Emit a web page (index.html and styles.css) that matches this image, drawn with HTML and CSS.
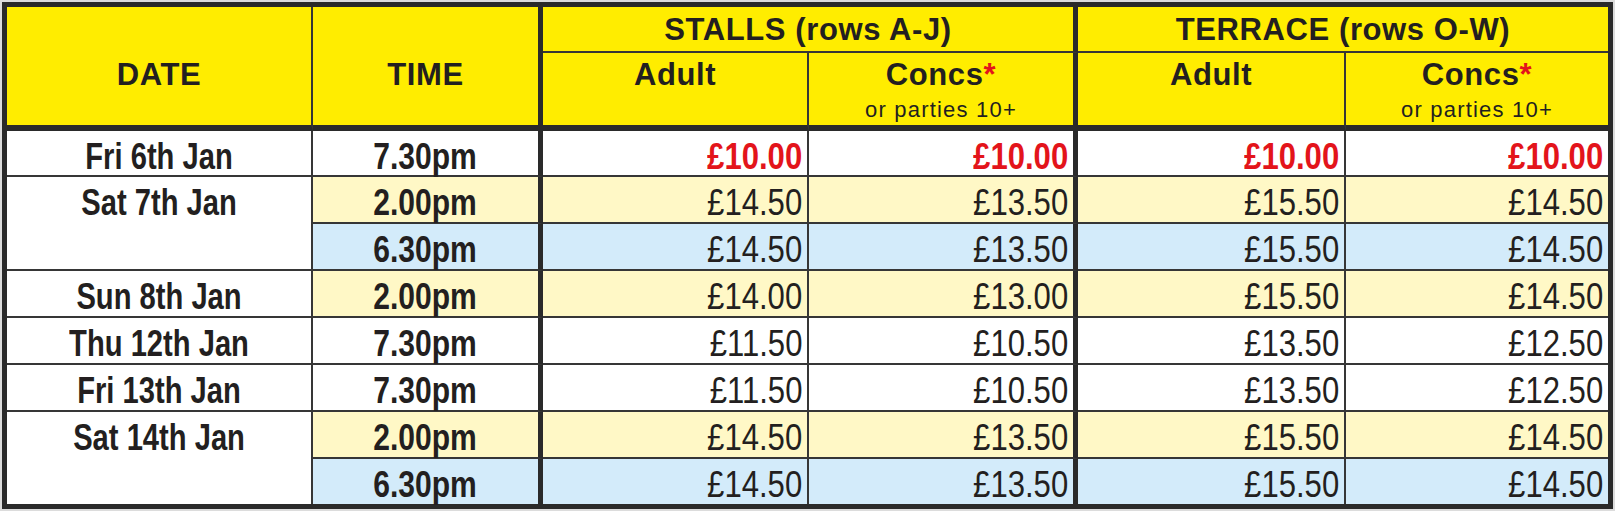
FILE: index.html
```html
<!DOCTYPE html>
<html lang="en">
<head>
<meta charset="utf-8">
<title>Ticket prices</title>
<link rel="stylesheet" href="styles.css">
</head>
<body>
<table class="prices">
  <colgroup>
    <col class="c-date"><col class="c-time"><col class="c-sa"><col class="c-sc"><col class="c-ta"><col class="c-tc">
  </colgroup>
  <thead>
    <tr class="group-row">
      <th rowspan="2" class="h-main thin">DATE</th>
      <th rowspan="2" class="h-main thick">TIME</th>
      <th colspan="2" class="h-group thick">STALLS (rows A-J)</th>
      <th colspan="2" class="h-group">TERRACE (rows O-W)</th>
    </tr>
    <tr class="sub-row">
      <th class="h-sub thin">Adult</th>
      <th class="h-sub thick">Concs<span class="star">*</span><span class="note">or parties 10+</span></th>
      <th class="h-sub thin">Adult</th>
      <th class="h-sub">Concs<span class="star">*</span><span class="note">or parties 10+</span></th>
    </tr>
  </thead>
  <tbody>
    <tr class="first">
      <td class="date thin"><span class="cn">Fri 6th Jan</span></td>
      <td class="time thick"><span class="cn">7.30pm</span></td>
      <td class="price promo thin"><span class="cn">£10.00</span></td>
      <td class="price promo thick"><span class="cn">£10.00</span></td>
      <td class="price promo thin"><span class="cn">£10.00</span></td>
      <td class="price promo"><span class="cn">£10.00</span></td>
    </tr>
    <tr class="row">
      <td rowspan="2" class="date thin"><span class="cn">Sat 7th Jan</span></td>
      <td class="time thick mat"><span class="cn">2.00pm</span></td>
      <td class="price thin mat"><span class="cn">£14.50</span></td>
      <td class="price thick mat"><span class="cn">£13.50</span></td>
      <td class="price thin mat"><span class="cn">£15.50</span></td>
      <td class="price mat"><span class="cn">£14.50</span></td>
    </tr>
    <tr class="row">
      <td class="time thick eve"><span class="cn">6.30pm</span></td>
      <td class="price thin eve"><span class="cn">£14.50</span></td>
      <td class="price thick eve"><span class="cn">£13.50</span></td>
      <td class="price thin eve"><span class="cn">£15.50</span></td>
      <td class="price eve"><span class="cn">£14.50</span></td>
    </tr>
    <tr class="row">
      <td class="date thin"><span class="cn">Sun 8th Jan</span></td>
      <td class="time thick mat"><span class="cn">2.00pm</span></td>
      <td class="price thin mat"><span class="cn">£14.00</span></td>
      <td class="price thick mat"><span class="cn">£13.00</span></td>
      <td class="price thin mat"><span class="cn">£15.50</span></td>
      <td class="price mat"><span class="cn">£14.50</span></td>
    </tr>
    <tr class="row">
      <td class="date thin"><span class="cn">Thu 12th Jan</span></td>
      <td class="time thick"><span class="cn">7.30pm</span></td>
      <td class="price thin"><span class="cn">£11.50</span></td>
      <td class="price thick"><span class="cn">£10.50</span></td>
      <td class="price thin"><span class="cn">£13.50</span></td>
      <td class="price"><span class="cn">£12.50</span></td>
    </tr>
    <tr class="row">
      <td class="date thin"><span class="cn">Fri 13th Jan</span></td>
      <td class="time thick"><span class="cn">7.30pm</span></td>
      <td class="price thin"><span class="cn">£11.50</span></td>
      <td class="price thick"><span class="cn">£10.50</span></td>
      <td class="price thin"><span class="cn">£13.50</span></td>
      <td class="price"><span class="cn">£12.50</span></td>
    </tr>
    <tr class="row">
      <td rowspan="2" class="date thin nob"><span class="cn">Sat 14th Jan</span></td>
      <td class="time thick mat"><span class="cn">2.00pm</span></td>
      <td class="price thin mat"><span class="cn">£14.50</span></td>
      <td class="price thick mat"><span class="cn">£13.50</span></td>
      <td class="price thin mat"><span class="cn">£15.50</span></td>
      <td class="price mat"><span class="cn">£14.50</span></td>
    </tr>
    <tr class="last">
      <td class="time thick eve"><span class="cn">6.30pm</span></td>
      <td class="price thin eve"><span class="cn">£14.50</span></td>
      <td class="price thick eve"><span class="cn">£13.50</span></td>
      <td class="price thin eve"><span class="cn">£15.50</span></td>
      <td class="price eve"><span class="cn">£14.50</span></td>
    </tr>
  </tbody>
</table>
</body>
</html>
```
FILE: styles.css
```css
* { box-sizing: border-box; }
html, body { margin: 0; }
body {
  padding: 2px;
  width: 1615px;
  height: 511px;
  overflow: hidden;
  background: #dcdcdc;
}
.prices {
  border-collapse: separate;
  border-spacing: 0;
  table-layout: fixed;
  width: 1611px;
  border: 5px solid #2a2a2a;
  background: #fff;
  color: #231f20;
}
.c-date { width: 306px; }
.c-time { width: 230px; }
.c-sa { width: 266px; }
.c-sc { width: 269px; }
.c-ta { width: 268px; }
.c-tc { width: 262px; }

th, td { padding: 0; }
.thin { border-right: 2px solid #363636; }
.thick { border-right: 5px solid #2a2a2a; }

thead th {
  background: #ffed00;
  font-family: "Liberation Sans", Arial, sans-serif;
  font-weight: 700;
  font-size: 31px;
  line-height: 31px;
  letter-spacing: 0.6px;
  text-align: center;
  vertical-align: top;
}
.group-row { height: 46px; }
.sub-row { height: 78px; }
.h-main { padding-top: 52px; border-bottom: 6px solid #2a2a2a; }
.h-group { padding-top: 7px; border-bottom: 2px solid #363636; }
.h-sub { padding-top: 6px; border-bottom: 6px solid #2a2a2a; }
.star { color: #e3141b; }
.note {
  display: block;
  margin-top: 9px;
  font-family: "Liberation Sans", Arial, sans-serif;
  font-weight: 400;
  font-size: 22px;
  line-height: 22px;
  letter-spacing: 1.2px;
}

tbody td {
  font-family: "Liberation Sans", Arial, sans-serif;
  font-size: 36px;
  line-height: 36px;
  vertical-align: top;
  padding-top: 8px;
  border-bottom: 2px solid #363636;
}
.first { height: 45px; }
.row { height: 47px; }
.last { height: 45px; }
.last td, td.nob { border-bottom: none; }

.cn { display: inline-block; white-space: nowrap; }
.date, .time { font-weight: 700; text-align: center; }
.date .cn { transform: scaleX(0.81); transform-origin: center; }
.time .cn { transform: scaleX(0.835); transform-origin: center; }
.price {
  font-size: 37px;
  line-height: 37px;
  font-weight: 400;
  text-align: right;
  padding-right: 5px;
  padding-top: 7px;
}
.price .cn { transform: scaleX(0.84); transform-origin: right center; }
.promo { color: #e3141b; font-weight: 700; }
.mat { background: #fff8c6; }
.eve { background: #d3ebfa; }
```
